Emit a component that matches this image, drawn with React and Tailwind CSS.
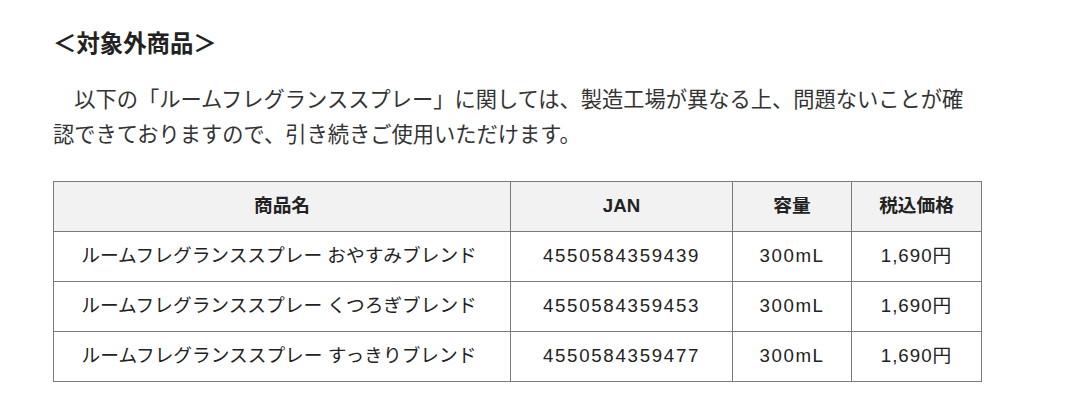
const rows = [
  { name: "ルームフレグランススプレー おやすみブレンド", jan: "4550584359439" },
  { name: "ルームフレグランススプレー くつろぎブレンド", jan: "4550584359453" },
  { name: "ルームフレグランススプレー すっきりブレンド", jan: "4550584359477" },
];

const lead =
  "\u3000以下の「ルームフレグランススプレー」に関しては、製造工場が異なる上、問題ないことが確認できておりますので、引き続きご使用いただけます。";

const App = () => {
  return (
    <div className="min-h-screen bg-white text-[#333] font-['Liberation_Sans','Noto_Sans_CJK_JP',sans-serif]">
      <div className="pl-[53px] pt-[28px]">
        <h2 className="text-[23.4px] leading-[32px] font-bold text-[#222]">＜対象外商品＞</h2>

        <p className="mt-[20px] w-[922px] text-[21.25px] leading-[35px] font-['Noto_Sans_CJK_JP',sans-serif]">
          {lead}
        </p>

        <table className="mt-[31px] w-[928px] table-fixed border-collapse text-[18.7px] text-[#222]">
          <colgroup>
            <col className="w-[457px]" />
            <col className="w-[222px]" />
            <col className="w-[119px]" />
            <col className="w-[130px]" />
          </colgroup>
          <thead>
            <tr className="h-[50px] bg-[#f2f2f2]">
              <th className="border border-[#7a7a7a] font-bold">商品名</th>
              <th className="border border-[#7a7a7a] font-bold">JAN</th>
              <th className="border border-[#7a7a7a] font-bold">容量</th>
              <th className="border border-[#7a7a7a] font-bold">税込価格</th>
            </tr>
          </thead>
          <tbody>
            {rows.map((r) => (
              <tr key={r.jan} className="h-[50px]">
                <td className="border border-[#7a7a7a] text-center pr-[6px]">{r.name}</td>
                <td className="border border-[#7a7a7a] text-center tracking-[1.7px]">{r.jan}</td>
                <td className="border border-[#7a7a7a] text-center tracking-[1.6px]">300mL</td>
                <td className="border border-[#7a7a7a] text-center tracking-[1px]">1,690円</td>
              </tr>
            ))}
          </tbody>
        </table>
      </div>
    </div>
  );
};

export default App;
